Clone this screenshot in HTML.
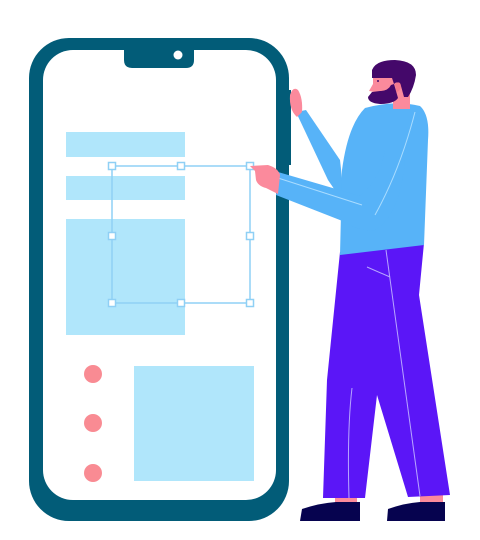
<!DOCTYPE html>
<html><head><style>
html,body{margin:0;padding:0;background:#fff;width:480px;height:540px;overflow:hidden}
svg{display:block}
</style></head><body>
<svg width="480" height="540" viewBox="0 0 480 540" xmlns="http://www.w3.org/2000/svg">
<rect x="29" y="38" width="260" height="483" rx="40" fill="#025c78"/>
<rect x="281" y="90" width="10" height="75" fill="#025c78"/>
<rect x="43" y="50" width="233" height="450" rx="30" fill="#fff"/>
<path d="M124 50 H194 V60 Q194 68 186 68 H132 Q124 68 124 60 Z" fill="#025c78"/>
<circle cx="178" cy="55" r="4.5" fill="#fff"/>
<g fill="#b0e6fb">
<rect x="66" y="132" width="119" height="25"/>
<rect x="66" y="176" width="119" height="24"/>
<rect x="66" y="219" width="119" height="116"/>
<rect x="134" y="366" width="120" height="115"/>
</g>
<g fill="#f98b93">
<circle cx="93" cy="374" r="9"/><circle cx="93" cy="423" r="9"/><circle cx="93" cy="473" r="9"/>
</g>
<g stroke="#8fd0f5" stroke-width="1.5" fill="none">
<rect x="112" y="166" width="138" height="137"/>
<g fill="#fff">
<rect x="108.5" y="162.5" width="7" height="7"/><rect x="177.5" y="162.5" width="7" height="7"/><rect x="246.5" y="162.5" width="7" height="7"/>
<rect x="108.5" y="232.5" width="7" height="7"/><rect x="246.5" y="232.5" width="7" height="7"/>
<rect x="108.5" y="299.5" width="7" height="7"/><rect x="177.5" y="299.5" width="7" height="7"/><rect x="246.5" y="299.5" width="7" height="7"/>
</g></g>
<rect x="335" y="495" width="22" height="9" fill="#fb8a9c"/>
<rect x="420" y="493" width="23" height="10" fill="#fb8a9c"/>
<path d="M302 509 Q320 503 336 502 H360 V521 H300 Z" fill="#06034f"/>
<path d="M388 509 Q405 503 420 502 H445 V521 H387 Z" fill="#06034f"/>
<path d="M340 252 L424 243 L419 295 L450 495 L408 497 L377 395 L365 498 L323 498 L327 380 Z" fill="#5b16f7"/>
<path d="M386 250 L420 496" stroke="#b8a6ff" stroke-width="1" fill="none"/>
<path d="M367 267 L390 277 M352 388 Q347 430 349 498" stroke="#b8a6ff" stroke-width="1" fill="none"/>
<path d="M296 112 L306 110 L340 160 L345 205 L328 180 Z" fill="#57b3f8"/>
<path d="M290 95 Q293 86 298 90 Q303 98 302 112 L297 117 Q289 110 290 95 Z" fill="#fb8a9c"/>
<path d="M365 108 Q395 100 420 106 Q430 115 428 140 L424 245 L340 255 L342 170 Q348 125 365 108 Z" fill="#57b3f8"/>
<path d="M278 172 L360 196 Q380 180 385 150 L405 160 Q400 215 375 230 Q360 232 345 222 L276 195 Z" fill="#57b3f8"/>
<path d="M278 178 L362 205 M415 112 Q400 170 375 215" stroke="#a9dcff" stroke-width="1" fill="none"/>
<path d="M250 166 L268 165 Q278 168 280 175 L278 194 L266 188 Q258 186 256 180 L255 171 Z" fill="#fb8a9c"/>
<!-- neck & face -->
<rect x="393" y="92" width="17" height="17" fill="#fb8a9c"/>
<path d="M373 76 L404 74 L406 98 Q398 103 385 101 L374 96 L374 92 L369 91 L373 84 Z" fill="#fb8a9c"/>
<!-- hair -->
<path d="M372 70 Q376 60 395 60 Q416 61 416 75 Q414 88 408 97 L404 97 L401 86 Q398 80 394 84 L392 78 L372 78 Z" fill="#44086a"/>
<!-- ear -->
<path d="M395 84 Q400 80 401 86 Q400 92 396 92 Z" fill="#f57a8e"/>
<!-- beard -->
<path d="M372 92 L380 91 Q388 91 391 85 L394 84 L398 98 Q394 104 380 104 Q368 103 368 97 Z" fill="#44086a"/>
<circle cx="378" cy="81" r="1" fill="#44086a"/>
</svg>
</body></html>
